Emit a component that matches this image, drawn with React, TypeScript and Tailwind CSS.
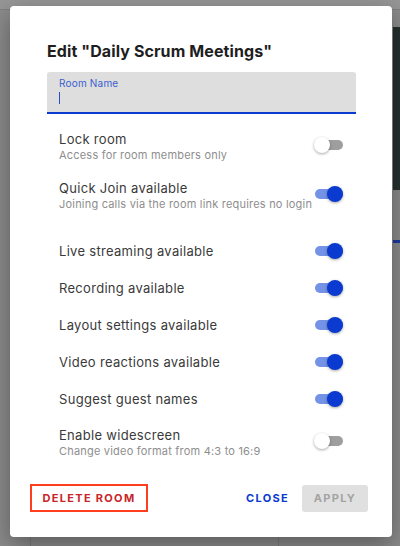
import React from "react";

function Toggle({ on }: { on: boolean }) {
  return (
    <div className="relative w-[30px] h-[18px] shrink-0">
      <div
        className={
          "absolute left-[1px] top-[4px] w-[28px] h-[10px] rounded-full " +
          (on ? "bg-[#7492e6]" : "bg-[#9e9e9e]")
        }
      />
      <div
        className={
          "absolute top-[1px] w-[16px] h-[16px] rounded-full shadow-[0_1px_3px_rgba(0,0,0,0.35)] " +
          (on ? "left-[13px] bg-[#0a3acf]" : "left-0 bg-white")
        }
      />
    </div>
  );
}

function Row({
  title,
  sub,
  on,
  className = "",
}: {
  title: string;
  sub?: string;
  on: boolean;
  className?: string;
}) {
  return (
    <div className={"flex items-center justify-between pl-[12px] pr-[12px] " + className}>
      <div className="flex flex-col min-w-0 whitespace-nowrap">
        <div className="text-[13px] leading-[16px] tracking-[0.3px] text-[#3a3a3a]">{title}</div>
        {sub && (
          <div className="text-[11px] leading-[14px] tracking-[0.2px] text-[#8e8e8e] mt-[1px]">{sub}</div>
        )}
      </div>
      <div className={"shrink-0 " + (sub ? "-mt-[4px]" : "")}>
        <Toggle on={on} />
      </div>
    </div>
  );
}

export default function App() {
  return (
    <div
      className="relative w-[400px] h-[546px] overflow-hidden bg-[#8b8b8b]"
      style={{ fontFamily: "Inter, 'Noto Sans', sans-serif" }}
    >
      {/* background page behind overlay */}
      <div className="absolute left-0 top-0 w-[400px] h-[9px] bg-[#969696]" />
      <div className="absolute left-0 top-[9px] w-[400px] h-[1px] bg-[#7f7f7f]" />
      <div className="absolute left-[393px] top-[27px] w-[7px] h-[163px] bg-[#25302f]" />
      <div className="absolute left-[393px] top-[240px] w-[7px] h-[3px] bg-[#1b3a9e]" />
      <div className="absolute left-[30px] top-[520px] w-[1px] h-[26px] bg-[#7a7a7a]" />
      <div className="absolute left-[278px] top-[520px] w-[1px] h-[26px] bg-[#7a7a7a]" />

      {/* dialog */}
      <div className="absolute left-[10px] top-[6px] w-[382px] h-[531px] bg-white rounded-[4px] shadow-[0_8px_24px_rgba(0,0,0,0.35)] flex flex-col">
        <div className="pl-[37px] pr-[36px] pt-[33px]">
          <div className="text-[16px] leading-[24px] font-bold text-[#1e1e1e] tracking-[0.1px]">
            Edit "Daily Scrum Meetings"
          </div>
          <div className="mt-[9px] h-[42px] bg-[#dedede] rounded-t-[3px] border-b-2 border-[#0a3acf] pl-[12px] pt-[5px]">
            <div className="text-[10px] leading-[12px] tracking-[0.2px] text-[#3a5fd0]">Room Name</div>
            <div className="mt-[3px] w-[1px] h-[12px] bg-[#2b4fc4]" />
          </div>

          <Row className="mt-[17px]" title="Lock room" sub="Access for room members only" on={false} />
          <Row className="mt-[18px]" title="Quick Join available" sub="Joining calls via the room link requires no login" on={true} />

          <div className="mt-[21px]">
            <Row className="h-[37px]" title="Live streaming available" on={true} />
            <Row className="h-[37px]" title="Recording available" on={true} />
            <Row className="h-[37px]" title="Layout settings available" on={true} />
            <Row className="h-[37px]" title="Video reactions available" on={true} />
            <Row className="h-[37px]" title="Suggest guest names" on={true} />
          </div>
          <Row className="mt-[10px]" title="Enable widescreen" sub="Change video format from 4:3 to 16:9" on={false} />
        </div>

        <div className="mt-auto mb-[25px] flex items-center pl-[20px] pr-[24px]">
          <div className="w-[118px] h-[28px] border-2 border-[#ff3d1f] flex items-center justify-center">
            <span className="text-[11px] font-bold tracking-[1.3px] text-[#c8262a]">DELETE ROOM</span>
          </div>
          <div className="ml-auto flex items-center">
            <span className="text-[11px] font-bold tracking-[1.3px] text-[#0a3acf]">CLOSE</span>
            <div className="ml-[13px] w-[66px] h-[27px] rounded-[3px] bg-[#e0e0e0] flex items-center justify-center">
              <span className="text-[11px] font-bold tracking-[1.3px] text-[#a3a3a3]">APPLY</span>
            </div>
          </div>
        </div>
      </div>
    </div>
  );
}
